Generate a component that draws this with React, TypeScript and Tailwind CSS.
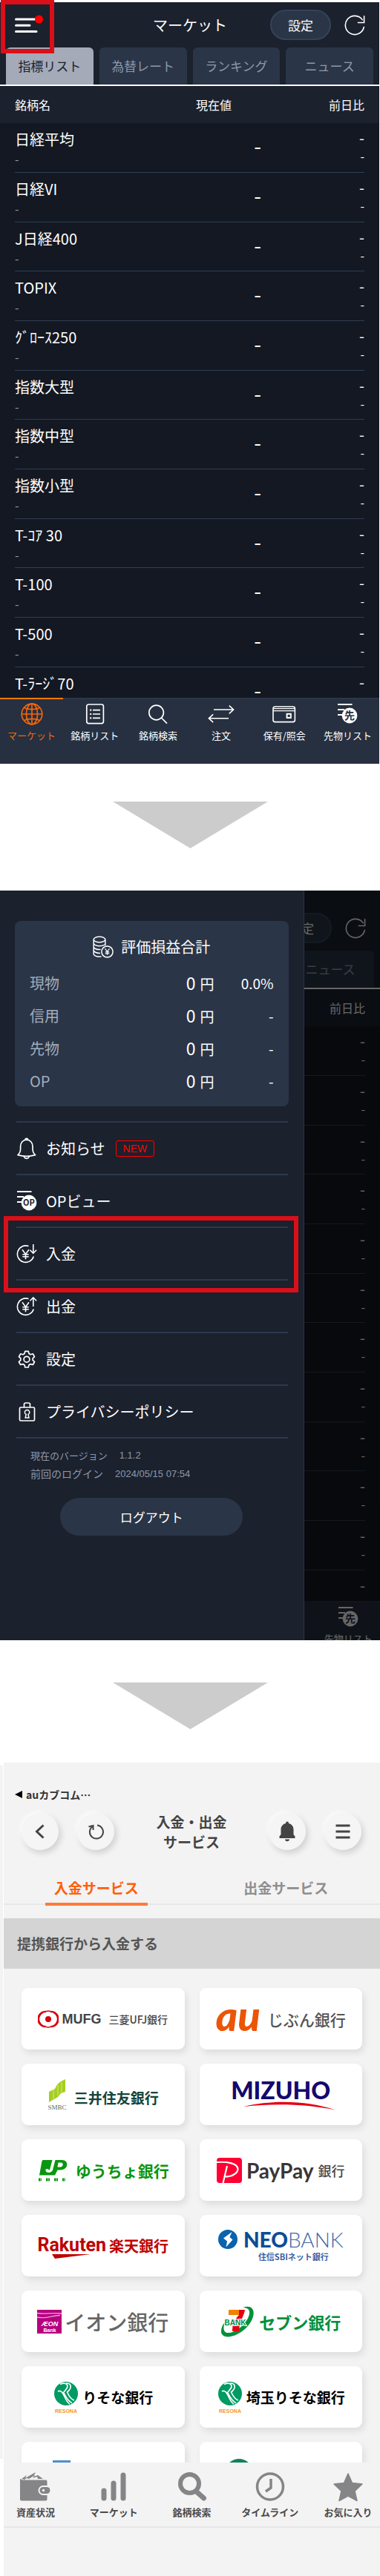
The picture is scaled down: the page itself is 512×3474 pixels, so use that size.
import React from "react";

const marketTabs = ["指標リスト", "為替レート", "ランキング", "ニュース"];

const indices = [
  "日経平均",
  "日経VI",
  "J日経400",
  "TOPIX",
  "ｸﾞﾛｰｽ250",
  "指数大型",
  "指数中型",
  "指数小型",
  "T-ｺｱ 30",
  "T-100",
  "T-500",
  "T-ﾗｰｼﾞ70",
];

function ReloadIcon() {
  return (
    <svg width="28" height="28" viewBox="0 0 28 28" fill="none" stroke="currentColor" strokeWidth="1.6" strokeLinecap="round">
      <path d="M26.3 16.5A12.6 12.6 0 1 1 24.2 6.6" />
      <path d="M26.6 1.8v8.7h-8.2" />
    </svg>
  );
}

function GlobeIcon() {
  return (
    <svg width="30" height="30" viewBox="0 0 30 30" fill="none" stroke="currentColor" strokeWidth="1.7">
      <circle cx="15" cy="15" r="13.8" />
      <ellipse cx="15" cy="15" rx="7.6" ry="13.8" />
      <path d="M15 1.2v27.6M1.2 15h27.6M4.6 6.4C10 9.4 20 9.4 25.4 6.4M4.6 23.6C10 20.6 20 20.6 25.4 23.6" />
    </svg>
  );
}

function ListIcon() {
  return (
    <svg width="30" height="30" viewBox="0 0 30 30" fill="none" stroke="currentColor" strokeWidth="1.7">
      <rect x="3.8" y="2" width="22.6" height="25.6" rx="2.5" />
      <path d="M12 9.7h10M12 15h10M12 20.4h10" />
      <path d="M8.2 9.7h2M8.2 15h2M8.2 20.4h2" strokeWidth="2.2" />
    </svg>
  );
}

function SearchIcon() {
  return (
    <svg width="30" height="30" viewBox="0 0 30 30" fill="none" stroke="currentColor" strokeWidth="1.7">
      <circle cx="12.6" cy="13" r="9.8" />
      <path d="M19.4 20 27 27.6" />
    </svg>
  );
}

function OrderIcon() {
  return (
    <svg width="38" height="30" viewBox="0 0 38 30" fill="none" stroke="currentColor" strokeWidth="1.6">
      <path d="M9 9h26.5M29.8 3.6 35.6 9l-5.8 5.4M29 20.8H2.5M8.2 15.4 2.4 20.8l5.8 5.4" />
    </svg>
  );
}

function WalletIcon() {
  return (
    <svg width="32" height="30" viewBox="0 0 32 30" fill="none" stroke="currentColor" strokeWidth="1.6">
      <rect x="1" y="5" width="29.4" height="20.6" rx="2.6" />
      <path d="M1 10.6h29.4M1.5 7.6h28.4" strokeWidth="1.2" />
      <rect x="19.6" y="14.8" width="5.2" height="5.2" strokeWidth="2" />
    </svg>
  );
}

function BadgeIcon({ label }: { label: string }) {
  return (
    <svg width="28" height="30" viewBox="0 0 28 30" fill="none">
      <path d="M1 2h19.5M1 9h9M1 16h6" stroke="currentColor" strokeWidth="1.8" />
      <circle cx="17" cy="17" r="10.4" fill="currentColor" />
      <text
        x="17"
        y={label.length > 1 ? 21 : 22}
        textAnchor="middle"
        className={
          label.length > 1
            ? "fill-[#1b212d] font-['Noto_Sans_CJK_JP',sans-serif] text-[11px] font-bold"
            : "fill-[#262f3f] font-['Noto_Sans_CJK_JP',sans-serif] text-[14px] font-bold"
        }
      >
        {label}
      </text>
    </svg>
  );
}

const marketNav = [
  { label: "マーケット", icon: <GlobeIcon />, active: true },
  { label: "銘柄リスト", icon: <ListIcon />, active: false },
  { label: "銘柄検索", icon: <SearchIcon />, active: false },
  { label: "注文", icon: <OrderIcon />, active: false },
  { label: "保有/照会", icon: <WalletIcon />, active: false },
  { label: "先物リスト", icon: <BadgeIcon label="先" />, active: false },
];

/* `covered` is set while the drawer lies over all but the right-hand edge. */
function MarketScreen({ covered = false }: { covered?: boolean }) {
  return (
    <div className="relative flex h-[1027px] flex-col overflow-hidden bg-[#131822] text-white">
      <header className="grid h-[61px] shrink-0 grid-cols-[1fr_auto_1fr] items-center bg-[#1b212d] pr-[19px] pl-5">
        <button type="button" aria-label="メニュー" className="w-10">
          <svg width="40" height="28" viewBox="0 0 40 28">
            <path d="M1.500 6h27M1.500 14.300h18.500M1.500 22.600h27.500" stroke="#fff" strokeWidth="3" strokeLinecap="round" />
            <circle cx="32.500" cy="6" r="5.500" fill="#ff0000" />
          </svg>
        </button>
        <h1 className={covered ? "invisible text-[20px] leading-7" : "text-[20px] leading-7"}>マーケット</h1>
        <div className="flex items-center justify-end gap-[18px]">
          <button type="button" className="h-[41px] w-[82px] rounded-full border-2 border-[#34435a] bg-[#2a3547] text-[17px] leading-6">
            設定
          </button>
          <button type="button" aria-label="更新">
            <ReloadIcon />
          </button>
        </div>
      </header>
      <nav className="grid shrink-0 grid-cols-4 gap-2 border-b-2 border-white bg-[#1b212d] px-2">
        {marketTabs.map((tab, i) => (
          <button
            key={tab}
            type="button"
            className={
              covered && i < 3
                ? "invisible h-[50px]"
                : i === 0
                  ? "h-[50px] rounded-t-md bg-[#a4aab8] text-[17px] text-[#1b212d]"
                  : "h-[50px] rounded-t-md bg-[#2a3547] text-[17px] text-[#8e99aa]"
            }
          >
            {tab}
          </button>
        ))}
      </nav>
      <table className="w-full border-collapse">
        <thead>
          <tr className="h-[50px] bg-[#1b212d] text-[16px]">
            <th scope="col" className="pl-5 text-left font-normal">
              <span className={covered ? "invisible" : "visible"}>銘柄名</span>
            </th>
            <th scope="col" className="w-40 pr-10 text-right font-normal">
              <span className={covered ? "invisible" : "visible"}>現在値</span>
            </th>
            <th scope="col" className="w-[159px] pr-5 text-right font-normal">前日比</th>
          </tr>
        </thead>
        <tbody>
          {indices.map((name) => (
            <tr key={name} className="group">
              <td className={covered ? "invisible p-0" : "p-0"}>
                <div className="ml-5 h-[67px] border-b border-[#303d51] pt-2 group-nth-[3n]:h-[66px]">
                  <div className="text-[20px] leading-7">{name}</div>
                  <div className="text-[16px] leading-6 text-[#8e99aa]">-</div>
                </div>
              </td>
              <td className={covered ? "invisible p-0" : "p-0"}>
                <div className="h-[67px] border-b border-[#303d51] pt-3 text-right text-[28px] leading-9 group-nth-[3n]:h-[66px]">
                  -
                </div>
              </td>
              <td className="p-0">
                <div className="mr-5 h-[67px] border-b border-[#303d51] pt-2 text-right group-nth-[3n]:h-[66px]">
                  <div className="text-[20px] leading-6">-</div>
                  <div className="text-[16px] leading-6">-</div>
                </div>
              </td>
            </tr>
          ))}
        </tbody>
      </table>
      <nav className="absolute inset-x-0 bottom-0 grid h-[89px] grid-cols-6 bg-[#263040]">
        {marketNav.map((item, i) => (
          <button
            key={item.label}
            type="button"
            className={
              covered && i < 5
                ? "invisible"
                : item.active
                  ? "flex flex-col items-center border-t-2 border-[#ff7800] pt-[5px] text-[#f2660d]"
                  : "flex flex-col items-center border-t-2 border-[#2c3747] pt-[5px]"
            }
          >
            {item.icon}
            <span className="pt-1 text-[13px] leading-5 whitespace-nowrap">{item.label}</span>
          </button>
        ))}
      </nav>
    </div>
  );
}

function StepArrow() {
  return (
    <svg className="mx-auto block h-[63px] w-[209px]" viewBox="0 0 209 63">
      <path d="M0 0h209L104.500 63z" fill="#cccccc" />
    </svg>
  );
}

function CoinsIcon() {
  return (
    <svg width="28" height="30" viewBox="0 0 28 30" fill="none" stroke="currentColor" strokeWidth="1.5">
      <ellipse cx="9" cy="5" rx="7.8" ry="3.8" />
      <path d="M1.200 5v19.400c0 2.100 3.400 3.800 7.800 3.800l2.500-.2M16.800 5v8M1.200 10c0 2.100 3.400 3.800 7.800 3.800 3 0 5.500-.7 7-1.800M1.200 14.800c0 2.100 3.400 3.800 7.800 3.800h1.500M1.200 19.600c0 2.100 3.400 3.800 7.800 3.800h1" />
      <circle cx="19.500" cy="21.500" r="7.600" />
      <path d="m16.500 17.300 3 4 3-4M19.500 21.300v4.500M16.800 21.800h5.400M16.800 23.900h5.400" strokeWidth="1.200" />
    </svg>
  );
}

function BellIcon() {
  return (
    <svg width="28" height="30" viewBox="0 0 28 30" fill="none" stroke="currentColor" strokeWidth="1.7" strokeLinejoin="round">
      <path d="M2 23.600c2.700-2.300 3.600-4.500 3.600-8.400V12c0-5 3.300-8.800 8.200-8.800S22 7 22 12v3.200c0 3.900.9 6.100 3.600 8.400-7 2-16.600 2-23.600 0z" />
      <path d="M12 3.200c0-2.400 3.600-2.400 3.600 0M10.300 25c.4 4.400 6.600 4.400 7 0" />
    </svg>
  );
}

function YenIcon({ up }: { up: boolean }) {
  return (
    <svg width="28" height="30" viewBox="0 0 28 30" fill="none" stroke="currentColor" strokeWidth="1.6">
      <path d="M16.500 4.600A11.200 11.200 0 1 0 23.300 18.500" />
      <path d="m8 9.300 4.500 6.200L17 9.300M12.500 15.500v6.800M8.300 15.800h8.400M8.300 18.800h8.400" />
      <path d={up ? "M22.800 15V3M18.500 7.300l4.300-4.500 4.300 4.500" : "M22.800 2v12M18.500 9.700l4.300 4.500 4.300-4.500"} />
    </svg>
  );
}

function GearIcon() {
  return (
    <svg width="28" height="30" viewBox="0 0 28 30" fill="none" stroke="currentColor" strokeWidth="1.7" strokeLinejoin="round">
      <path d="M11.800 4.300h4.400l.8 3.200 2.100 1.200 3.200-.9 2.200 3.800-2.300 2.300v2.500l2.300 2.300-2.200 3.800-3.200-.9-2.100 1.200-.8 3.200h-4.400l-.8-3.200-2.100-1.200-3.200.9-2.200-3.800 2.300-2.300v-2.500l-2.300-2.300 2.200-3.800 3.200.9L11 7.500z" />
      <circle cx="14" cy="15.200" r="3.900" />
    </svg>
  );
}

function LockIcon() {
  return (
    <svg width="28" height="30" viewBox="0 0 28 30" fill="none" stroke="currentColor" strokeWidth="1.700">
      <rect x="4.500" y="9" width="20" height="18" rx="1.500" />
      <path d="M10.500 9V5c0-1.200.8-2 2-2h4c1.200 0 2 .8 2 2v4" />
      <path d="M13.200 18.500a3.200 3.200 0 1 1 2.800 0l1 4.500h-4.800z" strokeWidth="1.500" />
    </svg>
  );
}

const profits = [
  { label: "現物", rate: "0.0%" },
  { label: "信用", rate: "-" },
  { label: "先物", rate: "-" },
  { label: "OP", rate: "-" },
];

const menuItems = [
  { label: "お知らせ", icon: <BellIcon />, isNew: true },
  { label: "OPビュー", icon: <BadgeIcon label="OP" /> },
  { label: "入金", icon: <YenIcon up={false} />, marked: true },
  { label: "出金", icon: <YenIcon up /> },
  { label: "設定", icon: <GearIcon /> },
  { label: "プライバシーポリシー", icon: <LockIcon /> },
];

function Drawer() {
  return (
    <aside className="absolute inset-y-0 left-0 w-4/5 border-r border-[#2a3547] bg-[#1b212d] px-5 pt-[41px] text-white">
      <section className="h-[250px] rounded-lg bg-[#2a3547] px-5 pt-5">
        <h2 className="flex items-center justify-center gap-2.5 text-[20px] leading-7">
          <CoinsIcon />
          評価損益合計
        </h2>
        <table className="mt-3 w-full">
          <tbody>
            {profits.map((row) => (
              <tr key={row.label} className="h-11">
                <th scope="row" className="text-left text-[20px] font-normal text-[#a3adbd]">{row.label}</th>
                <td className="text-right text-[19px] leading-7">
                  <span className="pr-1.5 text-[23px]">0</span>円
                </td>
                <td className="w-20 text-right text-[19px] leading-7">{row.rate}</td>
              </tr>
            ))}
          </tbody>
        </table>
      </section>
      <ul className="mt-5 mr-px ml-0.5 border-t-2 border-[#2c394d]">
        {menuItems.map((item) => (
          <li key={item.label} className="relative h-[71px] border-b-2 border-[#2c394d]">
            <a href="#menu" className="flex h-full items-center gap-3 text-[20px] leading-7">
              {item.icon}
              <span>{item.label}</span>
              {item.isNew && (
                <span className="ml-0.5 rounded-[3px] border border-[#f00] px-[9px] font-['Liberation_Sans',sans-serif] text-[14px] leading-5 text-[#f00]">
                  NEW
                </span>
              )}
            </a>
            {item.marked && <div className="absolute -top-4 -right-[14px] -bottom-[18px] -left-[17px] border-6 border-[#d90f1a]" />}
          </li>
        ))}
      </ul>
      <dl className="mt-2.5 ml-[21px] text-[#8d98aa]">
        <div className="flex gap-4 text-[13px] leading-[25px]">
          <dt>現在のバージョン</dt>
          <dd className="font-['Liberation_Sans',sans-serif]">1.1.2</dd>
        </div>
        <div className="flex gap-4 text-[14px] leading-[25px]">
          <dt>前回のログイン</dt>
          <dd className="font-['Liberation_Sans',sans-serif] text-[13px]">2024/05/15 07:54</dd>
        </div>
      </dl>
      <button type="button" className="mx-auto mt-5 block h-[51px] w-2/3 rounded-full bg-[#2a3547] text-[17px]">
        ログアウト
      </button>
    </aside>
  );
}

const roundButton =
  "flex size-[50px] items-center justify-center rounded-full bg-[#f5f5f5] text-[#444] shadow-[3px_4px_8px_rgba(0,0,0,0.15),-2px_-2px_5px_rgba(255,255,255,0.9)]";

function ResonaMark() {
  return (
    <svg width="36" height="44" viewBox="0 0 36 44">
      <circle cx="18" cy="17" r="16" fill="#009a63" />
      <path
        d="M10 4.500c8-3.500 13 1 7.500 7.500l-3 3.500C18 21 20 27 26 29.500M18 3c8 0 8 7 1.500 12 2.500 5.500 5 10 9.500 11M7 14c4-2 6 1 8 5s4 10 8 12"
        fill="none"
        stroke="#fff"
        strokeWidth="1.700"
      />
      <text x="18" y="43" textAnchor="middle" className="fill-[#f39a1e] font-['Liberation_Sans',sans-serif] text-[7px] font-bold">
        RESONA
      </text>
    </svg>
  );
}

const banks: { name: string; logo: React.ReactNode }[] = [
  {
    name: "MUFG 三菱UFJ銀行",
    logo: (
      <div className="flex items-center text-[#444]">
        <svg width="28" height="24" viewBox="0 0 28 24">
          <circle cx="14" cy="12" r="4" fill="#d7000f" />
          <path d="M10.500 1.500A13 11 0 0 0 10.500 22.500A10.500 10.500 0 0 1 10.500 1.500zM17.500 1.500A13 11 0 0 1 17.500 22.500A10.500 10.500 0 0 0 17.500 1.500z" fill="#d7000f" stroke="#d7000f" strokeWidth="1.500" />
          <path d="M9 3a8 9.500 0 0 1 10 0M9 21a8 9.500 0 0 0 10 0" fill="none" stroke="#d7000f" strokeWidth="1.500" />
        </svg>
        <span className="pl-1 font-['Liberation_Sans',sans-serif] text-[18px] leading-6 font-bold">MUFG</span>
        <span className="pl-2.5 text-[14px] leading-6 font-medium">三菱UFJ銀行</span>
      </div>
    ),
  },
  {
    name: "auじぶん銀行",
    logo: (
      <div className="flex items-center gap-2.5">
        <span className="pb-2.5 font-[Lato,sans-serif] text-[56px] leading-10 font-black text-[#eb5505] italic">au</span>
        <span className="text-[21px] leading-8 font-medium text-[#555]">じぶん銀行</span>
      </div>
    ),
  },
  {
    name: "三井住友銀行",
    logo: (
      <div className="flex items-center gap-2.5">
        <svg width="26" height="42" viewBox="0 0 26 42">
          <path d="M2 17l4-2 4-2 3-6 5-4 6-3v17l-6 2-4 5-5 3-7 4z" fill="#a5cf1f" />
          <path d="M8 14v14M14 7v15M19 4v14" stroke="#d3e88a" strokeWidth="1" />
          <text x="13" y="41" textAnchor="middle" className="fill-[#4d7468] font-['Liberation_Serif',serif] text-[9px]">
            SMBC
          </text>
        </svg>
        <span className="pt-2 text-[19px] leading-7 font-bold text-[#14453d]">三井住友銀行</span>
      </div>
    ),
  },
  {
    name: "MIZUHO",
    logo: (
      <div className="flex flex-col items-center">
        <span className="font-[Lato,sans-serif] text-[32px] leading-8 font-black text-[#14086e]">MIZUHO</span>
        <svg className="-mt-0.5 ml-6" width="124" height="14" viewBox="0 0 124 14">
          <path d="M0 8C40-2 88 0 124 12.500 88 5 44 3 0 8z" fill="#e60012" />
        </svg>
      </div>
    ),
  },
  {
    name: "ゆうちょ銀行",
    logo: (
      <div className="flex items-center gap-2.5 text-[#0a960f]">
        <svg width="42" height="30" viewBox="0 0 42 30">
          <path d="M8 1h13l-3 12c-.6 2-2.500 2-3 0l-3 .5c-.5 5 7 6 9 1L24.500 1h9c10 0 9 14-3 13.500h-3L24 21.500H3L6 5c.4-2.500 1-4 2-4z" fill="currentColor" />
          <path d="M28.500 4.500h3.500c4 0 3.500 6-1 6h-3.500z" fill="#fff" />
          <path d="M21.500 1 18 14.500c-.8 3.500-6.500 3-5.500-1" fill="none" stroke="#fff" strokeWidth="2" />
          <path d="M2 27.500h4M12 27.500h5M23 27.500h5M34 27.500h4" stroke="currentColor" strokeWidth="4" strokeDasharray="2.500 .7" />
        </svg>
        <span className="text-[21px] leading-8 font-bold">ゆうちょ銀行</span>
      </div>
    ),
  },
  {
    name: "PayPay銀行",
    logo: (
      <div className="flex items-center gap-1.5">
        <svg width="34" height="34" viewBox="0 0 34 34">
          <rect width="34" height="34" rx="4" fill="#ff0033" />
          <path d="M0 6c13-1 28 1 28.500 9 0 6-8 10.500-17.500 10.500M14 11 8.500 34" fill="none" stroke="#fff" strokeWidth="2.200" />
        </svg>
        <span className="font-[Lato,sans-serif] text-[28px] leading-8 font-bold text-[#3a3636]">PayPay</span>
        <span className="text-[18px] leading-8 font-medium text-[#4b4747]">銀行</span>
      </div>
    ),
  },
  {
    name: "Rakuten 楽天銀行",
    logo: (
      <div className="flex items-center gap-1 text-[#bf0000]">
        <div className="flex flex-col pt-1">
          <span className="font-[Roboto,sans-serif] text-[25px] leading-6 font-bold">Rakuten</span>
          <svg className="ml-5" width="52" height="6" viewBox="0 0 52 6">
            <path d="M0 0h52L4 6z" fill="currentColor" />
          </svg>
        </div>
        <span className="text-[20px] leading-8 font-bold">楽天銀行</span>
      </div>
    ),
  },
  {
    name: "NEOBANK 住信SBIネット銀行",
    logo: (
      <div className="grid grid-cols-[auto_auto] items-center gap-x-2">
        <svg width="26" height="26" viewBox="0 0 26 26">
          <circle cx="13" cy="13" r="13" fill="#0b62ae" />
          <path d="m18.500 3-3 7 4 3.500-9 10 1.500-8L7 11.500z" fill="#fff" />
        </svg>
        <span className="font-[Lato,sans-serif] text-[28px] leading-7 font-black text-[#0d4c96]">
          NEO<span className="font-light text-[#4468a6]">BANK</span>
        </span>
        <span className="col-start-2 pl-5 text-[11px] leading-[18px] font-bold text-[#3d60a2]">住信SBIネット銀行</span>
      </div>
    ),
  },
  {
    name: "イオン銀行",
    logo: (
      <div className="flex items-center gap-1">
        <svg width="33" height="32" viewBox="0 0 33 32">
          <rect width="33" height="32" fill="#b5007f" />
          <path d="M0 4.500c10 2 20-1 33 .5M0 10c14 3 20-3 31-2.500" fill="none" stroke="#e9a3d3" strokeWidth="1.300" />
          <text x="17" y="22" textAnchor="middle" className="fill-white font-['Liberation_Sans',sans-serif] text-[9px] font-bold italic">
            ÆON
          </text>
          <text x="17" y="30" textAnchor="middle" className="fill-white font-['Liberation_Sans',sans-serif] text-[7px] font-bold">
            Bank
          </text>
        </svg>
        <span className="text-[28px] leading-9 font-medium text-[#666]">イオン銀行</span>
      </div>
    ),
  },
  {
    name: "セブン銀行",
    logo: (
      <div className="flex items-center gap-1.5">
        <svg width="46" height="42" viewBox="0 0 46 42">
          <path d="M30 2C47-4 50 13 35 29 20 44 1 45 1 34c0-5 2-9 5-12-3 8-2 15 6 14 10-1 22-12 26-22 3-8 0-12-8-12z" fill="#00903a" />
          <path d="M11 5h14v7H11z" fill="#f08300" />
          <path d="M25 5h8c-1 8-7 14-8 29h-9c0-11 3-16 9-22z" fill="#e60012" />
          <text x="20" y="26" textAnchor="middle" className="fill-[#00903a] stroke-white stroke-2 font-['Liberation_Sans',sans-serif] text-[10px] font-bold [paint-order:stroke]">
            BANK
          </text>
        </svg>
        <span className="text-[22px] leading-8 font-bold text-[#00903a]">セブン銀行</span>
      </div>
    ),
  },
  {
    name: "りそな銀行",
    logo: (
      <div className="flex items-center gap-1">
        <ResonaMark />
        <span className="text-[19px] leading-7 font-bold text-black">りそな銀行</span>
      </div>
    ),
  },
  {
    name: "埼玉りそな銀行",
    logo: (
      <div className="flex items-center gap-1">
        <ResonaMark />
        <span className="text-[19px] leading-7 font-bold text-black">埼玉りそな銀行</span>
      </div>
    ),
  },
  {
    name: "その他の銀行 1",
    logo: (
      <svg className="mr-28" width="24" height="34" viewBox="0 0 24 34">
        <path d="M0 0h24v34H0z" fill="#4d8fc9" />
      </svg>
    ),
  },
  {
    name: "その他の銀行 2",
    logo: (
      <svg className="mr-28" width="38" height="38" viewBox="0 0 38 38">
        <circle cx="19" cy="19" r="19" fill="#12825c" />
      </svg>
    ),
  },
];

const serviceNav = [
  {
    label: "資産状況",
    icon: (
      <svg width="42" height="40" viewBox="0 0 42 40">
        <path d="M3.500 10.500h31c1.200 0 2 .8 2 2V18h-5.500a5 5 0 0 0 0 13h5.500v5.500c0 1.200-.8 2-2 2H2c-1.200 0-2-.8-2-2V9z" fill="#858587" />
        <path d="M2 9 9 4l-2 4 7-4 7-4-3 6 6-2 7 5H24l-1-3-6 2 3-4-8 5-3-1-3 2z" fill="#858587" />
        <rect x="26.500" y="20" width="14" height="9" rx="4.500" fill="#858587" />
        <circle cx="31.500" cy="24.500" r="1.700" fill="#f3f3f3" />
      </svg>
    ),
  },
  {
    label: "マーケット",
    icon: (
      <svg width="42" height="40" viewBox="0 0 42 40">
        <path d="M8 25v10M21 15v20M34 4v31" stroke="#858587" strokeWidth="7" strokeLinecap="round" />
      </svg>
    ),
  },
  {
    label: "銘柄検索",
    icon: (
      <svg width="42" height="40" viewBox="0 0 42 40" fill="none" stroke="#858587">
        <circle cx="17.500" cy="15.500" r="12.500" strokeWidth="6" />
        <path d="M27 26.500 36.500 35" strokeWidth="7" strokeLinecap="round" />
      </svg>
    ),
  },
  {
    label: "タイムライン",
    icon: (
      <svg width="42" height="40" viewBox="0 0 42 40" fill="none" stroke="#858587">
        <circle cx="21" cy="19.500" r="17.500" strokeWidth="3.500" />
        <path d="M22 9v12l-7 5" strokeWidth="3.500" />
      </svg>
    ),
  },
  {
    label: "お気に入り",
    icon: (
      <svg width="42" height="40" viewBox="0 0 42 40">
        <path d="m21 2 5.500 12.500L40 16 30 25.500 33 38.500 21 32 9 38.500 12 25.500 2 16l13.500-1.500z" fill="#858587" stroke="#858587" strokeWidth="1.500" strokeLinejoin="round" />
      </svg>
    ),
  },
];

function DepositScreen() {
  return (
    <div className="flex">
      <div className="mt-1 h-[935px] w-[5px] shrink-0 border-r border-white bg-[#f3f3f3]" />
      <main className="min-w-0 flex-1 bg-[#f3f3f3] text-[#444]">
        <div className="flex h-[1032px] flex-col">
          <a href="#app" className="flex items-center gap-[5px] pt-[31px] pl-[15px] text-[14px] leading-6 font-bold text-[#333]">
            <svg width="10" height="10" viewBox="0 0 10 10">
              <path d="M0 5 10 0v10z" fill="#000" />
            </svg>
            auカブコム…
          </a>
          <header className="mt-[11px] flex items-center justify-between pr-[25px] pl-6">
            <div className="flex gap-[25px]">
              <button type="button" aria-label="戻る" className={roundButton}>
                <svg width="20" height="24" viewBox="0 0 20 24" fill="none">
                  <path d="M14.500 3.500 5.500 12l9 8.500" stroke="currentColor" strokeWidth="3" />
                </svg>
              </button>
              <button type="button" aria-label="更新" className={roundButton}>
                <svg width="24" height="24" viewBox="0 0 24 24" fill="none">
                  <path d="M8 5A9 9 0 1 0 14 3.600" stroke="currentColor" strokeWidth="2" />
                  <path d="M2.500 5.500 8.500 4v6" stroke="currentColor" strokeWidth="2" />
                </svg>
              </button>
            </div>
            <h1 className="text-center text-[19px] leading-[27px] font-bold">
              入金・出金
              <br />
              サービス
            </h1>
            <div className="flex gap-[25px]">
              <button type="button" aria-label="通知" className={roundButton}>
                <svg width="22" height="28" viewBox="0 0 22 28">
                  <path d="M9 3c0-3.300 4-3.300 4 0 4 1 6.500 4 6.500 8v7l2 2.500V23H.5v-2.500l2-2.500v-7C2.500 7 5 4 9 3zM8 24.500h6c0 3.500-6 3.500-6 0z" fill="currentColor" />
                </svg>
              </button>
              <button type="button" aria-label="メニュー" className={roundButton}>
                <svg width="20" height="22" viewBox="0 0 20 22">
                  <path d="M.5 3h19M.5 11h19M.5 19h19" stroke="currentColor" strokeWidth="3" />
                </svg>
              </button>
            </div>
          </header>
          <nav className="mt-[35px] grid grid-cols-2 border-b-2 border-[#e8e8e8] text-[19px] leading-7 font-bold">
            <a href="#deposit" className="-mb-[3px] flex justify-center pr-1 text-[#ff5f0a]">
              <span className="border-b-4 border-[#ff7b3a] px-3 pb-1.5">入金サービス</span>
            </a>
            <a href="#withdraw" className="flex justify-center text-[#8f8f8f]">
              出金サービス
            </a>
          </nav>
          <h2 className="mt-[18px] h-[68px] bg-[#d4d4d4] pl-[18px] text-[19px] leading-[67px] font-bold text-[#555]">提携銀行から入金する</h2>
          <ul className="grid min-h-0 flex-1 auto-rows-[83px] grid-cols-2 gap-x-5 gap-y-[19px] overflow-hidden px-6 pt-[26px]">
            {banks.map((bank) => (
              <li key={bank.name}>
                <a
                  href="#bank"
                  aria-label={bank.name}
                  className="flex h-full items-center justify-center rounded-[9px] bg-white whitespace-nowrap shadow-[3px_5px_10px_rgba(0,0,0,0.09)]"
                >
                  {bank.logo}
                </a>
              </li>
            ))}
          </ul>
          <nav className="flex h-[88px] justify-between border-b-2 border-[#e6e6e6] px-[3px] pt-[13px]">
            {serviceNav.map((item) => (
              <button key={item.label} type="button" className="flex w-20 flex-col items-center text-[#4a4a4a]">
                {item.icon}
                <span className="pt-1 text-[13px] leading-5 font-bold whitespace-nowrap">{item.label}</span>
              </button>
            ))}
          </nav>
        </div>
        <div className="h-[65px]" />
      </main>
    </div>
  );
}

export default function App() {
  return (
    <div className="bg-white font-['Noto_Sans_CJK_JP',sans-serif]">
      <section className="relative pt-[3px] pr-px">
        <MarketScreen />
        <div className="absolute top-0 left-px size-[72px] border-6 border-[#d90f1a]" />
      </section>
      <div className="pt-[51px] pb-[57px]">
        <StepArrow />
      </div>
      <section className="relative h-[1011px] overflow-hidden bg-[#1b212d]">
        <div inert className="pt-5">
          <MarketScreen covered />
        </div>
        <div className="absolute inset-0 bg-black/60" />
        <Drawer />
      </section>
      <div className="pt-[57px] pb-[45px]">
        <StepArrow />
      </div>
      <DepositScreen />
    </div>
  );
}
